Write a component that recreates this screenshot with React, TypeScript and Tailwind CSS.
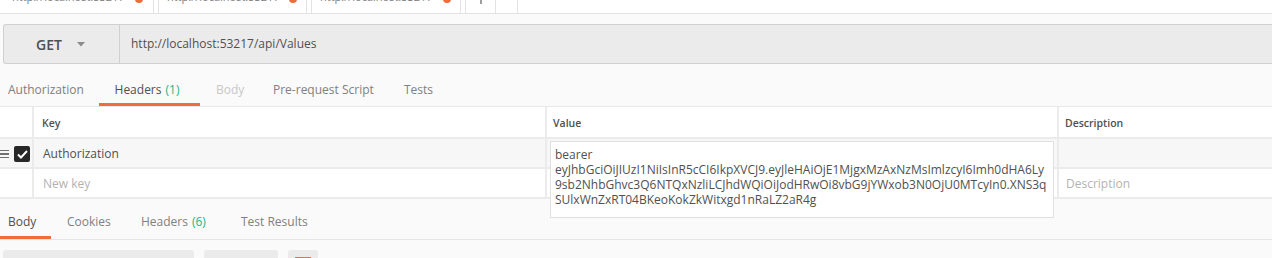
import React from "react";

const token = [
  "bearer",
  "eyJhbGciOiJIUzI1NiIsInR5cCI6IkpXVCJ9.eyJleHAiOjE1MjgxMzAxNzMsImlzcyI6Imh0dHA6Ly",
  "9sb2NhbGhvc3Q6NTQxNzliLCJhdWQiOiJodHRwOi8vbG9jYWxob3N0OjU0MTcyIn0.XNS3q",
  "SUlxWnZxRT04BKeoKokZkWitxgd1nRaLZ2aR4g",
];

const Dot = () => <span className="ml-auto shrink-0 w-[8px] h-[8px] rounded-full bg-[#f26b3a]" />;

const App = () => {
  return (
    <main className="w-[1272px] h-[258px] overflow-hidden bg-[#fafafa] text-[#505050] font-['Open_Sans',sans-serif] text-[12px]">
      {/* open request tabs, scrolled so only their bottom shows */}
      <div className="h-[14px] bg-white border-b border-[#e3e3e3] overflow-hidden">
        <div className="flex h-[30px] -mt-[16px] text-[#808080] text-[11px]">
          <div className="w-[154px] h-full border-r border-[#e3e3e3] flex items-center pl-[12px] pr-[10px]">
            <span className="-mt-[4px]">http://localhost:53217</span>
            <Dot />
          </div>
          <div className="ml-[4px] w-[149px] h-full border-x border-[#e3e3e3] flex items-center pl-[8px] pr-[9px]">
            <span className="-mt-[4px]">http://localhost:53217</span>
            <Dot />
          </div>
          <div className="ml-[4px] w-[150px] h-full border-x border-[#e3e3e3] flex items-center pl-[8px] pr-[9px]">
            <span className="-mt-[4px]">http://localhost:53217</span>
            <Dot />
          </div>
          <div className="ml-[4px] w-[31px] h-full border-x border-[#e3e3e3] flex items-center justify-center">
            <svg width="10" height="10" viewBox="0 0 10 10">
              <path d="M5 0 V10 M0 5 H10" stroke="#808080" strokeWidth="1.5" />
            </svg>
          </div>
          <div className="w-[22px] h-full border-r border-[#e3e3e3] flex items-end justify-center gap-[2px] pb-[14px]">
            <span className="w-[2px] h-[2px] bg-[#808080]" />
            <span className="w-[2px] h-[2px] bg-[#808080]" />
            <span className="w-[2px] h-[2px] bg-[#808080]" />
          </div>
        </div>
      </div>

      {/* url bar */}
      <div className="mt-[10px] ml-[3px] h-[40px] flex bg-[#ebebeb] border border-r-0 border-[#d0d0d0] rounded-l-[3px]">
        <div className="w-[116px] h-full border-r border-[#d0d0d0] flex items-center pl-[32px]">
          <span className="text-[14px] font-semibold">GET</span>
          <svg width="8" height="5" viewBox="0 0 8 5" className="ml-[15px]">
            <path d="M0 0 L8 0 L4 4.5 Z" fill="#8a8a8a" />
          </svg>
        </div>
        <div className="flex items-center pl-[11px] text-[12px]">http://localhost:53217/api/Values</div>
      </div>

      {/* request tabs */}
      <div className="mt-[11px] h-[32px] flex border-b border-[#e8e8e8] text-[#808080]">
        <div className="w-[99px] h-full flex items-center pt-[2px] pl-[8px] border-b-[3px] border-transparent">Authorization</div>
        <div className="w-[101px] h-full flex items-center justify-center pt-[2px] pr-[5px] border-b-[3px] border-[#f26b3a] text-[#505050]">
          Headers<span className="ml-[4px] text-[#26b47f]">(1)</span>
        </div>
        <div className="w-[57px] h-full flex items-center pt-[2px] pl-[16px] border-b-[3px] border-transparent text-[#c8c8c8]">Body</div>
        <div className="w-[133px] h-full flex items-center pt-[2px] pl-[16px] border-b-[3px] border-transparent">Pre-request Script</div>
        <div className="h-full flex items-center pt-[2px] pl-[14px] border-b-[3px] border-transparent">Tests</div>
      </div>

      {/* headers table */}
      <div className="relative grid grid-cols-[32px_511px_510px_213px] grid-rows-[30px_28px_28px] gap-[2px] bg-[#ebebeb] border-b-2 border-[#ebebeb]">
        <div className="bg-white" />
        <div className="bg-white flex items-center pt-[3px] pl-[8px] text-[10.5px] font-semibold">Key</div>
        <div className="bg-white flex items-center pt-[3px] pl-[6px] text-[10.5px] font-semibold">Value</div>
        <div className="bg-white flex items-center pt-[3px] pl-[6px] text-[10.5px] font-semibold">Description</div>

        <div className="bg-[#f7f7f7] flex items-center pt-[2px]">
          <div className="flex flex-col gap-[2px] w-[9px]">
            <span className="h-[1.5px] bg-[#707070]" />
            <span className="h-[1.5px] bg-[#707070]" />
            <span className="h-[1.5px] bg-[#707070]" />
          </div>
          <div className="ml-[5px] w-[16px] h-[16px] rounded-[2px] bg-[#282828] flex items-center justify-center">
            <svg width="11" height="9" viewBox="0 0 11 9">
              <path d="M1 4.5 L4 7.5 L10 1" stroke="white" strokeWidth="2" fill="none" />
            </svg>
          </div>
        </div>
        <div className="bg-[#f7f7f7] flex items-center pt-[2px] pl-[9px]">Authorization</div>
        <div className="bg-[#f7f7f7]" />
        <div className="bg-[#f7f7f7]" />

        <div className="bg-white" />
        <div className="bg-white flex items-center pt-[2px] pl-[9px] text-[#b3b3b3]">New key</div>
        <div className="bg-white" />
        <div className="bg-white flex items-center pt-[2px] pl-[7px] text-[#b3b3b3]">Description</div>

        {/* expanded value editor */}
        <div className="absolute left-[550px] top-[34px] w-[504px] h-[77px] bg-white border border-[#e0e0e0] pl-[4px] pt-[5px] leading-[15px]">
          {token.map((line) => (
            <div key={line} className="whitespace-nowrap">
              {line}
            </div>
          ))}
        </div>
      </div>

      {/* response tabs */}
      <div className="h-[41px] flex border-b border-[#e6e6e6] text-[#808080]">
        <div className="w-[51px] h-full flex items-center pt-[9px] pl-[8px] border-b-[3px] border-[#f26b3a] text-[#505050]">Body</div>
        <div className="w-[74px] h-full flex items-center pt-[9px] pl-[16px] border-b-[3px] border-transparent">Cookies</div>
        <div className="w-[100px] h-full flex items-center pt-[9px] pl-[16px] border-b-[3px] border-transparent">
          Headers<span className="ml-[4px] text-[#26b47f]">(6)</span>
        </div>
        <div className="h-full flex items-center pt-[9px] pl-[16px] border-b-[3px] border-transparent">Test Results</div>
      </div>

      {/* response toolbar */}
      <div className="mt-[10px] flex pl-[3px]">
        <div className="w-[191px] h-[20px] bg-[#ebebeb] rounded-t-[3px]" />
        <div className="ml-[10px] w-[74px] h-[20px] bg-[#ebebeb] rounded-t-[3px]" />
        <div className="ml-[10px] w-[30px] h-[20px] bg-[#ebebeb] rounded-t-[3px] pl-[7px] pt-[7px]">
          <div className="w-[16px] h-[2px] bg-[#f26b3a]" />
        </div>
      </div>
    </main>
  );
};

export default App;
